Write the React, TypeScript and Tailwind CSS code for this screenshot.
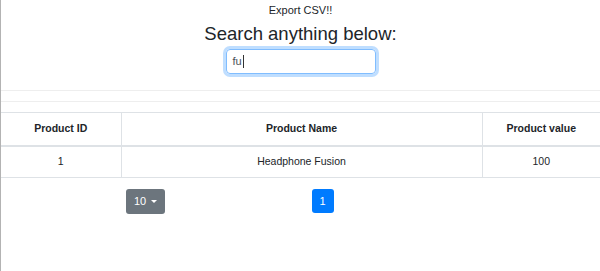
export default function App() {
    const rows = [{ id: 1, name: "Headphone Fusion", value: 100 }];

    return (
        <div className="h-[271px] w-full border-l border-[#b3b3b3] bg-white text-[#212529] font-['Liberation_Sans',Arial,sans-serif] overflow-hidden">
            <div className="flex flex-col items-center">
                <div className="pt-[3px] text-[11px] leading-[14px]">Export CSV!!</div>
                <h2 className="mt-[5px] text-[18.5px] leading-[24px]">Search anything below:</h2>
                <div className="mt-[3px] flex h-[25px] w-[150px] items-center rounded-[4px] border border-[#80bdff] px-[6px] text-[11px] text-[#495057] shadow-[0_0_0_3px_rgba(0,123,255,0.25)]">
                    fu<span className="ml-px h-[13px] w-px bg-[#333]"></span>
                </div>
            </div>

            <div className="mt-[16px] border-t border-[#eeeeee]"></div>
            <div className="mt-[10px] border-t border-[#eeeeee]"></div>

            <table className="mt-[10px] w-full border-collapse text-[10.5px] table-fixed">
                <thead>
                    <tr className="h-[33px]">
                        <th className="w-[120px] border border-l-0 border-b-2 border-[#dee2e6] font-bold">Product ID</th>
                        <th className="w-[361px] border border-b-2 border-[#dee2e6] font-bold">Product Name</th>
                        <th className="border border-r-0 border-b-2 border-[#dee2e6] font-bold">Product value</th>
                    </tr>
                </thead>
                <tbody>
                    {rows.map(r => (
                        <tr key={r.id} className="h-[32px] text-center">
                            <td className="border border-l-0 border-[#dee2e6]">{r.id}</td>
                            <td className="border border-[#dee2e6]">{r.name}</td>
                            <td className="border border-r-0 border-[#dee2e6]">{r.value}</td>
                        </tr>
                    ))}
                </tbody>
            </table>

            <div className="mt-[11px] grid grid-cols-2">
                <div className="pl-[125px]">
                    <div className="flex h-[25px] w-[39px] items-center justify-center gap-[5px] rounded-[3px] bg-[#6c757d] text-[11px] text-white">
                        10
                        <span className="h-0 w-0 border-x-[3px] border-t-[3px] border-x-transparent border-t-white"></span>
                    </div>
                </div>
                <div className="pl-[11px]">
                    <div className="flex h-[24px] w-[22px] items-center justify-center rounded-[3px] bg-[#007bff] text-[11px] text-white">
                        1
                    </div>
                </div>
            </div>
        </div>
    );
}
